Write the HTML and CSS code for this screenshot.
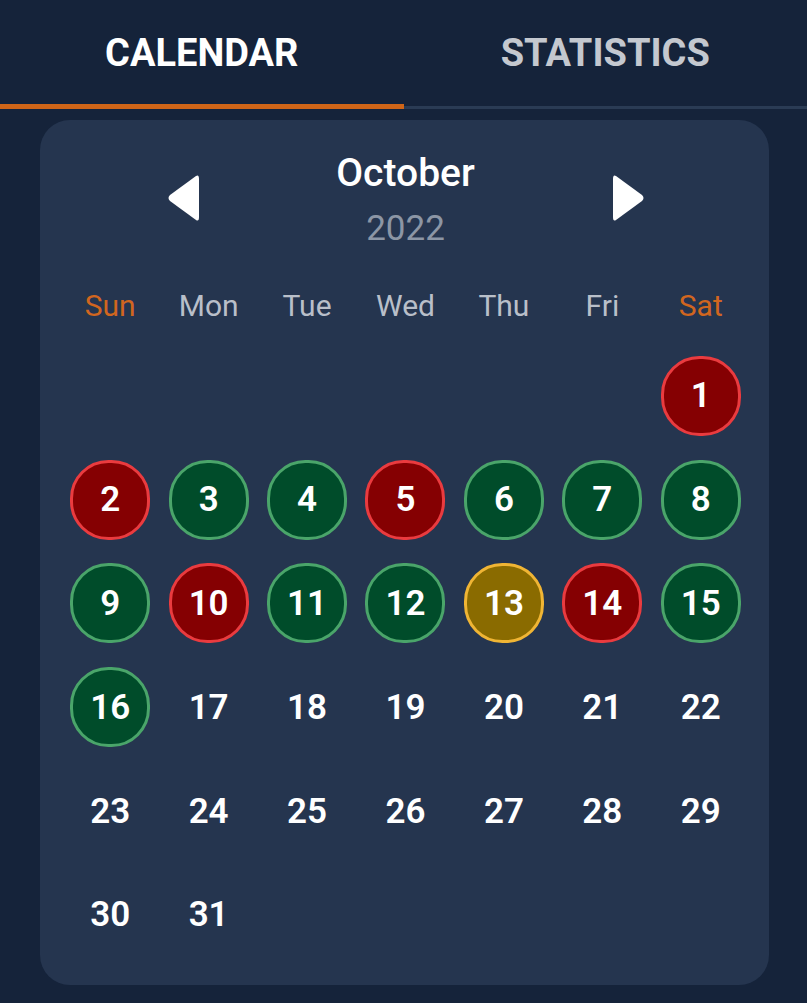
FILE: index.html
```html
<!DOCTYPE html>
<html lang="en">
<head>
<meta charset="utf-8">
<title>Calendar</title>
<link rel="stylesheet" href="styles.css">
</head>
<body>
<nav class="tabs">
  <div class="tab tab-active">CALENDAR</div>
  <div class="tab">STATISTICS</div>
</nav>
<main class="card">
  <header class="month-head">
    <svg class="arrow" viewBox="0 0 32 50" width="32" height="50"><path d="M29 3 Q32 1 32 6 L32 44 Q32 49 29 47 L3 28 Q0 25 3 22 Z" fill="#fff"/></svg>
    <div class="month-title">
      <div class="month">October</div>
      <div class="year">2022</div>
    </div>
    <svg class="arrow" viewBox="0 0 32 50" width="32" height="50"><path d="M3 3 Q0 1 0 6 L0 44 Q0 49 3 47 L29 28 Q32 25 29 22 Z" fill="#fff"/></svg>
  </header>
  <div class="weekdays">
    <span class="weekend">Sun</span><span>Mon</span><span>Tue</span><span>Wed</span><span>Thu</span><span>Fri</span><span class="weekend">Sat</span>
  </div>
  <div class="days">
    <span class="day"></span><span class="day"></span><span class="day"></span><span class="day"></span><span class="day"></span><span class="day"></span>
    <span class="day"><b class="dot red">1</b></span>
    <span class="day"><b class="dot red">2</b></span>
    <span class="day"><b class="dot green">3</b></span>
    <span class="day"><b class="dot green">4</b></span>
    <span class="day"><b class="dot red">5</b></span>
    <span class="day"><b class="dot green">6</b></span>
    <span class="day"><b class="dot green">7</b></span>
    <span class="day"><b class="dot green">8</b></span>
    <span class="day"><b class="dot green">9</b></span>
    <span class="day"><b class="dot red">10</b></span>
    <span class="day"><b class="dot green">11</b></span>
    <span class="day"><b class="dot green">12</b></span>
    <span class="day"><b class="dot yellow">13</b></span>
    <span class="day"><b class="dot red">14</b></span>
    <span class="day"><b class="dot green">15</b></span>
    <span class="day"><b class="dot green">16</b></span>
    <span class="day"><b class="dot">17</b></span>
    <span class="day"><b class="dot">18</b></span>
    <span class="day"><b class="dot">19</b></span>
    <span class="day"><b class="dot">20</b></span>
    <span class="day"><b class="dot">21</b></span>
    <span class="day"><b class="dot">22</b></span>
    <span class="day"><b class="dot">23</b></span>
    <span class="day"><b class="dot">24</b></span>
    <span class="day"><b class="dot">25</b></span>
    <span class="day"><b class="dot">26</b></span>
    <span class="day"><b class="dot">27</b></span>
    <span class="day"><b class="dot">28</b></span>
    <span class="day"><b class="dot">29</b></span>
    <span class="day"><b class="dot">30</b></span>
    <span class="day"><b class="dot">31</b></span>
  </div>
</main>
</body>
</html>
```

FILE: styles.css
```css
* { box-sizing: border-box; }
html, body { margin: 0; }
body {
  background: #15233a;
  font-family: Roboto, "Noto Sans", "Liberation Sans", sans-serif;
  color: #fff;
  width: 807px;
  height: 1003px;
  overflow: hidden;
}
.tabs {
  display: flex;
  height: 109px;
}
.tab {
  flex: 1;
  display: flex;
  justify-content: center;
  align-items: flex-start;
  padding-top: 31px;
  font-size: 38px;
  font-weight: 700;
  color: #c4c8cf;
  border-bottom: 3px solid #2a3b54;
}
.tab-active {
  color: #fff;
  border-bottom: 5px solid #cf6518;
}
.card {
  margin: 11px 38px 0 40px;
  height: 865px;
  background: #25354f;
  border-radius: 30px;
  padding: 0 19px 0 21px;
}
.month-head {
  display: flex;
  justify-content: center;
  align-items: flex-start;
  padding-top: 30px;
}
.arrow { flex: none; margin-top: 23px; }
.month-title {
  width: 414px;
  display: flex;
  flex-direction: column;
  align-items: center;
}
.month {
  font-size: 39px;
  font-weight: 500;
  line-height: 46px;
}
.year {
  font-size: 35px;
  color: #8c96a5;
  line-height: 46px;
  margin-top: 10px;
}
.weekdays {
  display: grid;
  grid-template-columns: repeat(7, 1fr);
  margin-top: 34px;
  font-size: 30px;
  color: #b9bfc9;
  line-height: 40px;
}
.weekdays span { text-align: center; }
.weekdays .weekend { color: #d1661f; }
.days {
  display: grid;
  grid-template-columns: repeat(7, 1fr);
  grid-auto-rows: 103.8px;
  margin-top: 18px;
}
.day {
  display: flex;
  justify-content: center;
  align-items: center;
}
.dot {
  width: 80px;
  height: 80px;
  border-radius: 48%;
  display: flex;
  justify-content: center;
  align-items: center;
  font-size: 35px;
  font-weight: 600;
  color: #fff;
  border: 3px solid transparent;
}
.red { background: #850002; border-color: #ea3b3f; }
.green { background: #004c2a; border-color: #4aa56a; }
.yellow { background: #8a6b00; border-color: #f0b534; }
```
